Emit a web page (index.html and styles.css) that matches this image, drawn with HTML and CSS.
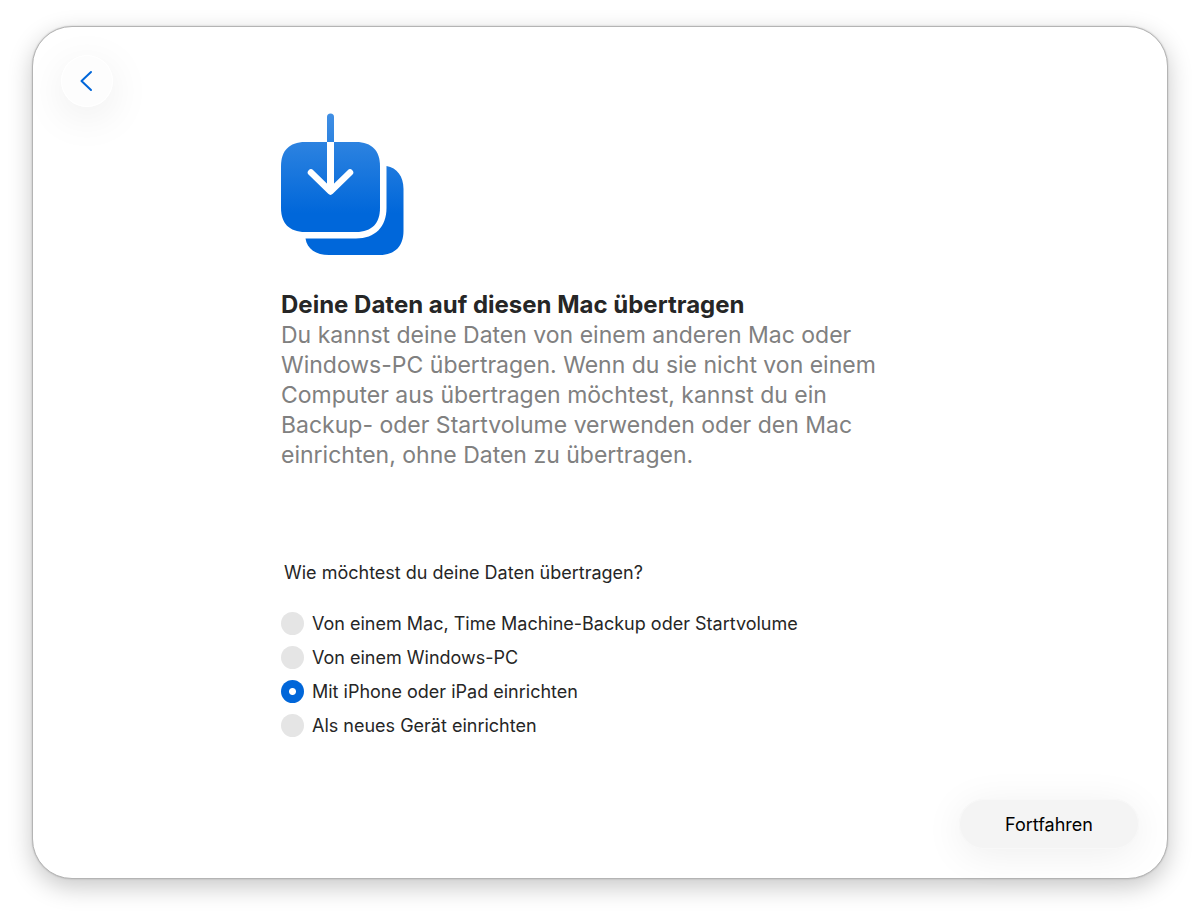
FILE: index.html
```
<!DOCTYPE html>
<html lang="de">
<head>
    <meta charset="UTF-8">
    <meta name="viewport" content="width=device-width, initial-scale=1">
    <title>Deine Daten auf diesen Mac übertragen</title>
    <link rel="stylesheet" href="styles.css">
</head>
<body>
<div class="window">
    <header class="top">
        <button type="button" class="back" aria-label="Zurück">
            <svg width="14" height="22" viewBox="0 0 14 22" fill="none">
                <path d="M12 2L2.500 11L12 20" stroke="#0066d9" stroke-width="2" stroke-linecap="round" stroke-linejoin="round"/>
            </svg>
        </button>
    </header>
    <main class="content">
        <svg class="logo" width="123" height="143" viewBox="0 0 123 143" fill="none" aria-hidden="true">
            <defs>
                <linearGradient id="blue" gradientUnits="userSpaceOnUse" x1="0" y1="0" x2="0" y2="143">
                    <stop offset="0" stop-color="#418fe4"/>
                    <stop offset="0.200" stop-color="#2d83e0"/>
                    <stop offset="0.700" stop-color="#0067da"/>
                    <stop offset="1" stop-color="#0067da"/>
                </linearGradient>
            </defs>
            <path d="M46 29V4a3.500 3.500 0 0 1 7 0v25z" fill="url(#blue)"/>
            <path d="M24 29H75C91 29 99 38 99 53V95C99 110 91 119 75 119H24C8 119 0 110 0 95V53C0 38 8 29 24 29z" fill="url(#blue)"/>
            <path d="M105.500 53C116 55 122.500 63 122.500 76V118C122.500 133 114 142 99 142H48C35 142 26 136 24.500 125.500H75C94 125.500 105.500 114 105.500 95z" fill="url(#blue)"/>
            <path d="M49.500 29V78" stroke="#fff" stroke-width="7"/>
            <path d="M30 59.500L49.500 78.500L69 59.500" stroke="#fff" stroke-width="6.500" stroke-linecap="round" stroke-linejoin="round"/>
        </svg>
        <h1>Deine Daten auf diesen Mac übertragen</h1>
        <p class="intro">Du kannst deine Daten von einem anderen Mac oder Windows-PC übertragen. Wenn du sie nicht von einem Computer aus übertragen möchtest, kannst du ein Backup- oder Startvolume verwenden oder den Mac einrichten, ohne Daten zu übertragen.</p>
        <form id="transfer">
            <fieldset>
                <legend>Wie möchtest du deine Daten übertragen?</legend>
                <label><input type="radio" name="source" value="mac"> Von einem Mac, Time Machine-Backup oder Startvolume</label>
                <label><input type="radio" name="source" value="windows"> Von einem Windows-PC</label>
                <label><input type="radio" name="source" value="iphone" checked> Mit iPhone oder iPad einrichten</label>
                <label><input type="radio" name="source" value="new"> Als neues Gerät einrichten</label>
            </fieldset>
        </form>
    </main>
    <footer class="bottom">
        <button type="submit" form="transfer" class="continue">Fortfahren</button>
    </footer>
</div>
</body>
</html>
```
FILE: styles.css
```
* {
    box-sizing: border-box;
}
body {
    display: flex;
    min-height: 100vh;
    margin: 0;
    padding: 26px 32px 37px;
    background: #fff;
    color: #262626;
    font-family: Inter, "Liberation Sans", sans-serif;
    font-size: 18px;
}
button {
    border: 0;
    font: inherit;
}
.window {
    display: flex;
    flex: 1;
    flex-direction: column;
    padding: 28px 28px 29px;
    border: 1px solid #b4b4b4;
    border-radius: 40px;
    background: #fff;
    box-shadow: 0 0 2px rgba(0, 0, 0, 0.2), 0 8px 24px rgba(0, 0, 0, 0.22);
}
.back {
    display: flex;
    align-items: center;
    justify-content: center;
    width: 52px;
    height: 52px;
    padding: 0 3px 0 0;
    border-radius: 50%;
    background: #fdfdfd;
    box-shadow: inset 0 0 0 1px #fff, 0 10px 44px rgba(0, 0, 0, 0.08);
}
.content {
    flex: 1;
    width: 100%;
    max-width: 638px;
    margin: 0 auto;
    padding-top: 6px;
}
.logo {
    display: block;
    margin-bottom: 34px;
}
h1 {
    margin: 0;
    font-size: 24px;
    font-weight: 700;
    line-height: 30px;
}
.intro {
    max-width: 600px;
    margin: 0;
    color: #808080;
    font-size: 23px;
    line-height: 30px;
}
fieldset {
    display: flex;
    flex-direction: column;
    margin: 91px 0 0;
    padding: 0;
    border: 0;
}
legend {
    margin-bottom: 21px;
    padding: 0 3px;
    line-height: 24px;
}
label {
    display: flex;
    align-items: center;
    gap: 8px;
    min-height: 34px;
}
input {
    flex: none;
    appearance: none;
    width: 23px;
    height: 23px;
    margin: 0;
    border-radius: 50%;
    background: #e5e5e5;
}
input:checked {
    background: radial-gradient(circle, #fff 3px, #0066d9 4px);
}
.bottom {
    display: flex;
    justify-content: flex-end;
}
.continue {
    width: 180px;
    height: 50px;
    border-radius: 25px;
    background: #f4f4f4;
    color: #000;
    box-shadow: inset 0 0 0 1px #f8f8f8, 0 6px 40px rgba(0, 0, 0, 0.07);
}
```
